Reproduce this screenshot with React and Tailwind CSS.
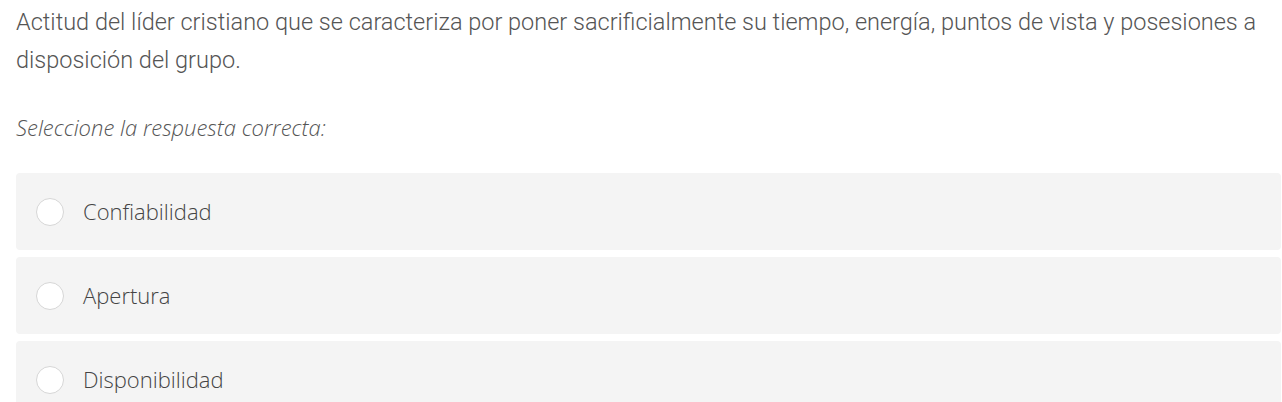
export default function App() {
  const options = ["Confiabilidad", "Apertura", "Disponibilidad"];
  return (
    <div className="w-[1282px] h-[402px] overflow-hidden bg-white pl-4 pr-[1px]">
      <p className="pt-[3px] -mr-[1px] text-[23.5px] leading-[38px] font-light text-[#555]" style={{ fontFamily: "Roboto, sans-serif" }}>
        Actitud del líder cristiano que se caracteriza por poner sacrificialmente su tiempo, energía, puntos de vista y posesiones a disposición del grupo.
      </p>
      <p className="mt-[33px] text-[22px] leading-[30px] italic text-[#555] font-light" style={{ fontFamily: "'Open Sans', sans-serif" }}>
        Seleccione la respuesta correcta:
      </p>
      <div className="mt-[31px] flex flex-col gap-[7px]">
        {options.map((o) => (
          <div key={o} className="h-[77px] rounded-[4px] bg-[#f4f4f4] flex items-center pl-[20px]">
            <span className="w-[28px] h-[28px] rounded-full bg-white border-[1.5px] border-[#d6d6d6] shrink-0" />
            <span className="ml-[19px] text-[22px] font-light text-[#444]" style={{ fontFamily: "'Open Sans', sans-serif" }}>{o}</span>
          </div>
        ))}
      </div>
    </div>
  );
}
